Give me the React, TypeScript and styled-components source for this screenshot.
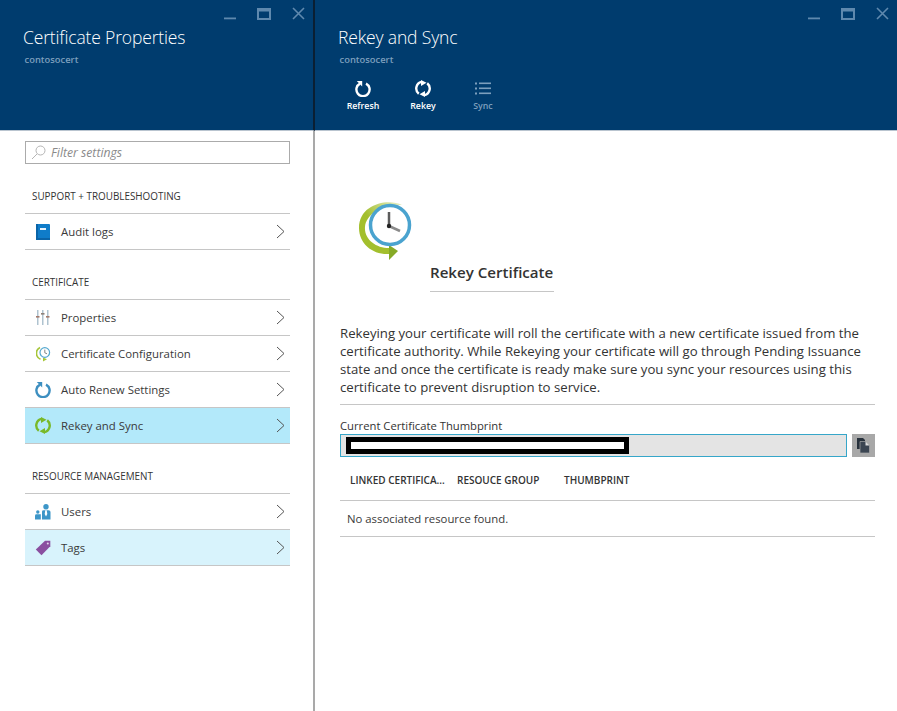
import React from 'react';
import styled, { createGlobalStyle } from 'styled-components';

const GlobalStyle = createGlobalStyle`
  html, body {
    margin: 0;
    padding: 0;
    background: #fff;
  }
  body {
    font-family: "Open Sans", "Noto Sans", "Liberation Sans", sans-serif;
    color: #3a3a3a;
  }
`;

const Page = styled.div`
  display: flex;
  width: 897px;
  height: 711px;
  overflow: hidden;
`;

const LeftBlade = styled.section`
  width: 313px;
  flex: none;
  border-right: 2px solid #a9a9a9;
`;

const RightBlade = styled.section`
  flex: 1;
  min-width: 0;
`;

const Header = styled.header<{ $divider?: boolean }>`
  position: relative;
  height: 131px;
  box-sizing: border-box;
  background: #003c6e;
  border-bottom: 1px solid #b9c4cf;
  margin-right: ${(p) => (p.$divider ? '-2px' : '0')};
  border-right: ${(p) => (p.$divider ? '2px solid #0a1f33' : 'none')};
  padding: 25px 0 0 23px;
`;

const WindowControls = styled.div`
  position: absolute;
  top: 7px;
  right: 8px;
  display: flex;
  align-items: center;
  gap: 21px;
`;

const BladeTitle = styled.h1`
  margin: 0;
  font-size: 17.5px;
  line-height: 25px;
  font-weight: 300;
  color: #fff;
  letter-spacing: -0.15px;
`;

const BladeSubtitle = styled.div`
  margin: 4px 0 0 1.5px;
  font-size: 9.4px;
  line-height: 12px;
  font-weight: 600;
  color: #7d9fbd;
`;

const CommandBar = styled.div`
  display: flex;
  margin: 14px 0 0 -5px;
`;

const Command = styled.div<{ $disabled?: boolean }>`
  width: 60px;
  display: flex;
  flex-direction: column;
  align-items: center;
  gap: 3px;
  font-size: 8.8px;
  line-height: 12px;
  font-weight: 600;
  color: ${(p) => (p.$disabled ? '#7d9fbd' : '#fff')};
`;

const CommandIcon = styled.span`
  height: 17px;
  display: flex;
  align-items: center;
`;

const Sidebar = styled.div`
  padding: 10px 23px 0 25px;
`;

const FilterBox = styled.div`
  height: 23px;
  box-sizing: border-box;
  border: 1px solid #ababab;
  display: flex;
  align-items: center;
  padding-left: 5px;
  gap: 5px;
  font-size: 12.2px;
  font-style: italic;
  color: #8a8a8a;
`;

const SectionLabel = styled.div`
  height: 49px;
  box-sizing: border-box;
  padding: 25px 0 0 7px;
  font-size: 9.9px;
  line-height: 14px;
  font-weight: 500;
  color: #333;
`;

const MenuList = styled.div`
  border-top: 1px solid #c6c6c6;
`;

const MenuRow = styled.div<{ $bg?: string }>`
  height: 36px;
  box-sizing: border-box;
  display: flex;
  align-items: center;
  border-bottom: 1px solid #c6c6c6;
  background: ${(p) => p.$bg ?? 'transparent'};
  padding: 0 5px 0 10px;
`;

const RowIcon = styled.span`
  width: 16px;
  height: 18px;
  flex: none;
  display: flex;
  align-items: center;
  justify-content: center;
`;

const RowLabel = styled.span`
  flex: 1;
  margin-left: 10px;
  font-size: 11.4px;
  color: #3a3a3a;
`;

const Content = styled.div`
  padding: 69px 22px 0 25px;
`;

const Hero = styled.div`
  display: flex;
  height: 92px;
`;

const HeroIcon = styled.div`
  width: 90px;
  flex: none;
  padding-left: 18px;
  box-sizing: border-box;
`;

const HeroTitle = styled.h2`
  margin: 63px 0 0 0;
  width: 124px;
  height: 29px;
  box-sizing: border-box;
  border-bottom: 1px solid #c6c6c6;
  font-size: 15.1px;
  line-height: 18px;
  font-weight: 600;
  white-space: nowrap;
  color: #333;
`;

const Paragraph = styled.p`
  margin: 32px 0 0;
  padding-bottom: 4px;
  border-bottom: 1px solid #c6c6c6;
  font-size: 13.2px;
  line-height: 18px;
  color: #333;
  height: 76px;
  white-space: nowrap;
`;

const FieldLabel = styled.div`
  margin-top: 13px;
  font-size: 11.25px;
  line-height: 16px;
  color: #333;
`;

const FieldRow = styled.div`
  display: flex;
  gap: 5px;
`;

const ThumbField = styled.div`
  position: relative;
  width: 507px;
  height: 23px;
  box-sizing: border-box;
  background: #e4e4e4;
  border: 1px solid #36a6c9;
`;

const Redaction = styled.div`
  position: absolute;
  left: 5px;
  top: 2px;
  width: 273px;
  height: 7px;
  background: #fff;
  border: 5px solid #000;
`;

const CopyButton = styled.div`
  width: 23px;
  height: 23px;
  background: #a8a8a8;
  display: flex;
  align-items: center;
  justify-content: center;
`;

const TableHead = styled.div`
  display: flex;
  height: 44px;
  align-items: center;
  border-bottom: 1px solid #c6c6c6;
  font-size: 10px;
  font-weight: 600;
  color: #333;
  box-sizing: border-box;
  padding-top: 3px;
`;

const HeadCell = styled.div<{ $w: number; $pad: number }>`
  width: ${(p) => p.$w}px;
  padding-left: ${(p) => p.$pad}px;
  box-sizing: border-box;
  white-space: nowrap;
`;

const EmptyRow = styled.div`
  height: 36px;
  box-sizing: border-box;
  border-bottom: 1px solid #c6c6c6;
  padding: 10px 0 0 7px;
  font-size: 11.35px;
  line-height: 16px;
  color: #3a3a3a;
`;

const controlColor = '#5f89ae';

const Controls = () => (
  <WindowControls>
    <svg width="12" height="12" viewBox="0 0 12 12">
      <rect x="0" y="9.5" width="12" height="1.8" fill={controlColor} />
    </svg>
    <svg width="14" height="12" viewBox="0 0 14 12">
      <rect x="1" y="1" width="12" height="10" fill="none" stroke={controlColor} strokeWidth="2" />
      <rect x="1" y="1" width="12" height="2.5" fill={controlColor} />
    </svg>
    <svg width="13" height="13" viewBox="0 0 13 13">
      <path d="M1 1l11 11M12 1L1 12" stroke={controlColor} strokeWidth="1.6" fill="none" />
    </svg>
  </WindowControls>
);

const SearchIcon = () => (
  <svg width="15" height="15" viewBox="0 0 15 15" fill="none" stroke="#b5b5b5" strokeWidth="1">
    <circle cx="9.5" cy="5.5" r="4.5" />
    <path d="M6 9L1 14" />
  </svg>
);

const Chevron = () => (
  <svg width="9" height="15" viewBox="0 0 9 15" fill="none" stroke="#555" strokeWidth="1">
    <path d="M1 1l7 6.5L1 14" />
  </svg>
);

const RefreshGlyph = ({ color = '#fff' }: { color?: string }) => (
  <svg width="16" height="17" viewBox="0 0 16 17" fill="none">
    <path d="M5 3.6A6.6 6.6 0 1 0 11 3.6" stroke={color} strokeWidth="2.4" />
    <path d="M1.8 1L7.2 1L7.2 6.4Z" fill={color} />
  </svg>
);

const RekeyGlyph = ({ color = '#fff' }: { color?: string }) => (
  <svg width="16" height="17" viewBox="0 0 16 17" fill="none">
    <path d="M3.8 13.8A6.8 6.8 0 0 1 6.5 1.9" stroke={color} strokeWidth="2.4" />
    <path d="M6 0L11.5 2.8 6 6Z" fill={color} />
    <path d="M12.2 3.2A6.8 6.8 0 0 1 9.5 15.1" stroke={color} strokeWidth="2.4" />
    <path d="M10 17L4.5 14.2 10 11Z" fill={color} />
  </svg>
);

const SyncGlyph = () => (
  <svg width="16" height="13" viewBox="0 0 16 13" fill="#7d9fbd">
    <rect x="0" y="0.5" width="2" height="2" />
    <rect x="0" y="5.5" width="2" height="2" />
    <rect x="0" y="10.5" width="2" height="2" />
    <rect x="4" y="0.5" width="12" height="1.6" />
    <rect x="4" y="5.5" width="12" height="1.6" />
    <rect x="4" y="10.5" width="12" height="1.6" />
  </svg>
);

const BookIcon = () => (
  <svg width="14" height="16" viewBox="0 0 14 16">
    <rect x="0" y="0" width="14" height="16" rx="1" fill="#0f7cc9" />
    <rect x="0" y="0" width="2" height="16" fill="#0a64a8" />
    <rect x="4" y="4" width="6" height="2" fill="#e8f2fa" />
    <rect x="0" y="14" width="14" height="2" fill="#0a64a8" />
  </svg>
);

const SlidersIcon = () => (
  <svg width="14" height="15" viewBox="0 0 14 15">
    <rect x="1" y="0" width="1.5" height="15" fill="#afc3d0" />
    <rect x="6" y="0" width="1.5" height="15" fill="#afc3d0" />
    <rect x="11" y="0" width="1.5" height="15" fill="#afc3d0" />
    <rect x="0" y="6" width="3.5" height="1.6" fill="#a37a6c" />
    <rect x="5" y="3" width="3.5" height="1.6" fill="#8e8078" />
    <rect x="10" y="6" width="3.5" height="1.6" fill="#a37a6c" />
  </svg>
);

const SmallClockIcon = () => (
  <svg width="15" height="16" viewBox="0 0 15 16" fill="none">
    <path d="M4 1.5A6.4 6.4 0 0 0 4.5 13.2" stroke="#a6c639" strokeWidth="1.7" />
    <path d="M7 11.5L11 13.2 7 15.5Z" fill="#a6c639" />
    <circle cx="8.8" cy="6.5" r="4.8" fill="#fff" stroke="#55a8cf" strokeWidth="1.2" />
    <path d="M8.8 3.6V6.8L11 7.8" stroke="#666" strokeWidth="0.8" />
  </svg>
);

const UsersIcon = () => (
  <svg width="16" height="16" viewBox="0 0 16 16" fill="#3d96c8">
    <circle cx="11" cy="2.8" r="2.7" />
    <path d="M7 15.5V7.5Q7 6.2 8.5 6.2H13.5Q15.5 6.2 15.5 8V15.5Z" />
    <path d="M10.3 6.2H11.7L12.3 10 11 12.5 9.7 10Z" fill="#fff" />
    <circle cx="2.8" cy="8" r="1.7" />
    <path d="M0 15.5V11.5Q0 10.3 1.4 10.3H5.8V15.5Z" />
  </svg>
);

const TagIcon = () => (
  <svg width="16" height="16" viewBox="0 0 16 16">
    <path d="M10 .8h5.3v5.4L6.5 15.2.8 9.5Z" fill="#8a4fa0" />
    <circle cx="12.8" cy="3.4" r="1" fill="#e6d6ec" />
  </svg>
);

const BigClockIcon = () => (
  <svg width="56" height="62" viewBox="0 0 56 62" fill="none">
    <defs>
      <linearGradient id="arcFade" x1="0.8" y1="0" x2="0.3" y2="0.4">
        <stop offset="0" stopColor="#dfe9b4" />
        <stop offset="1" stopColor="#a3bf2d" />
      </linearGradient>
    </defs>
    <path
      d="M44 5C30 -2 1 4 1 28C1 44 15 55 31 54L31 48C18 48 6 39 7 27C8 14 24 4 44 5Z"
      fill="url(#arcFade)"
    />
    <path d="M31 45L40 51 31 60Z" fill="#86aa27" />
    <circle cx="32" cy="25" r="19.5" fill="#fff" stroke="#4aa3cf" strokeWidth="3.5" />
    <path d="M31 12V26" stroke="#5c5c5c" strokeWidth="2.5" />
    <path d="M31 26L42 31" stroke="#8a8a8a" strokeWidth="2.5" />
    <circle cx="31" cy="26" r="2.2" fill="#222" />
  </svg>
);

const CopyIcon = () => (
  <svg width="13" height="15" viewBox="0 0 13 15">
    <path d="M0 0H6L8 2V11H0Z" fill="#27313c" />
    <path d="M3 3.5H8.5L12.5 7.5V15H3Z" fill="#3b4552" stroke="#a8a8a8" strokeWidth="0.7" />
    <path d="M8.5 3.5V7.5H12.5Z" fill="#dcdcdc" />
  </svg>
);

const certificateRows = [
  { label: 'Properties', icon: <SlidersIcon /> },
  { label: 'Certificate Configuration', icon: <SmallClockIcon /> },
  { label: 'Auto Renew Settings', icon: <RefreshGlyph color="#3d8fc0" /> },
  { label: 'Rekey and Sync', icon: <RekeyGlyph color="#7ab929" />, bg: '#b3e9fa' },
];

export default function App() {
  return (
    <Page>
      <GlobalStyle />
      <LeftBlade>
        <Header $divider>
          <Controls />
          <BladeTitle>Certificate Properties</BladeTitle>
          <BladeSubtitle>contosocert</BladeSubtitle>
        </Header>
        <Sidebar>
          <FilterBox>
            <SearchIcon />
            Filter settings
          </FilterBox>
          <SectionLabel>SUPPORT + TROUBLESHOOTING</SectionLabel>
          <MenuList>
            <MenuRow>
              <RowIcon><BookIcon /></RowIcon>
              <RowLabel>Audit logs</RowLabel>
              <Chevron />
            </MenuRow>
          </MenuList>
          <SectionLabel>CERTIFICATE</SectionLabel>
          <MenuList>
            {certificateRows.map((row) => (
              <MenuRow key={row.label} $bg={row.bg}>
                <RowIcon>{row.icon}</RowIcon>
                <RowLabel>{row.label}</RowLabel>
                <Chevron />
              </MenuRow>
            ))}
          </MenuList>
          <SectionLabel>RESOURCE MANAGEMENT</SectionLabel>
          <MenuList>
            <MenuRow>
              <RowIcon><UsersIcon /></RowIcon>
              <RowLabel>Users</RowLabel>
              <Chevron />
            </MenuRow>
            <MenuRow $bg="#d8f3fc">
              <RowIcon><TagIcon /></RowIcon>
              <RowLabel>Tags</RowLabel>
              <Chevron />
            </MenuRow>
          </MenuList>
        </Sidebar>
      </LeftBlade>
      <RightBlade>
        <Header>
          <Controls />
          <BladeTitle>Rekey and Sync</BladeTitle>
          <BladeSubtitle>contosocert</BladeSubtitle>
          <CommandBar>
            <Command><CommandIcon><RefreshGlyph /></CommandIcon>Refresh</Command>
            <Command><CommandIcon><RekeyGlyph /></CommandIcon>Rekey</Command>
            <Command $disabled><CommandIcon><SyncGlyph /></CommandIcon>Sync</Command>
          </CommandBar>
        </Header>
        <Content>
          <Hero>
            <HeroIcon><BigClockIcon /></HeroIcon>
            <HeroTitle>Rekey Certificate</HeroTitle>
          </Hero>
          <Paragraph>
            Rekeying your certificate will roll the certificate with a new certificate issued from the<br />
            certificate authority. While Rekeying your certificate will go through Pending Issuance<br />
            state and once the certificate is ready make sure you sync your resources using this<br />
            certificate to prevent disruption to service.
          </Paragraph>
          <FieldLabel>Current Certificate Thumbprint</FieldLabel>
          <FieldRow>
            <ThumbField><Redaction /></ThumbField>
            <CopyButton><CopyIcon /></CopyButton>
          </FieldRow>
          <TableHead>
            <HeadCell $w={117} $pad={10}>LINKED CERTIFICA...</HeadCell>
            <HeadCell $w={107} $pad={0}>RESOUCE GROUP</HeadCell>
            <HeadCell $w={100} $pad={0}>THUMBPRINT</HeadCell>
          </TableHead>
          <EmptyRow>No associated resource found.</EmptyRow>
        </Content>
      </RightBlade>
    </Page>
  );
}
